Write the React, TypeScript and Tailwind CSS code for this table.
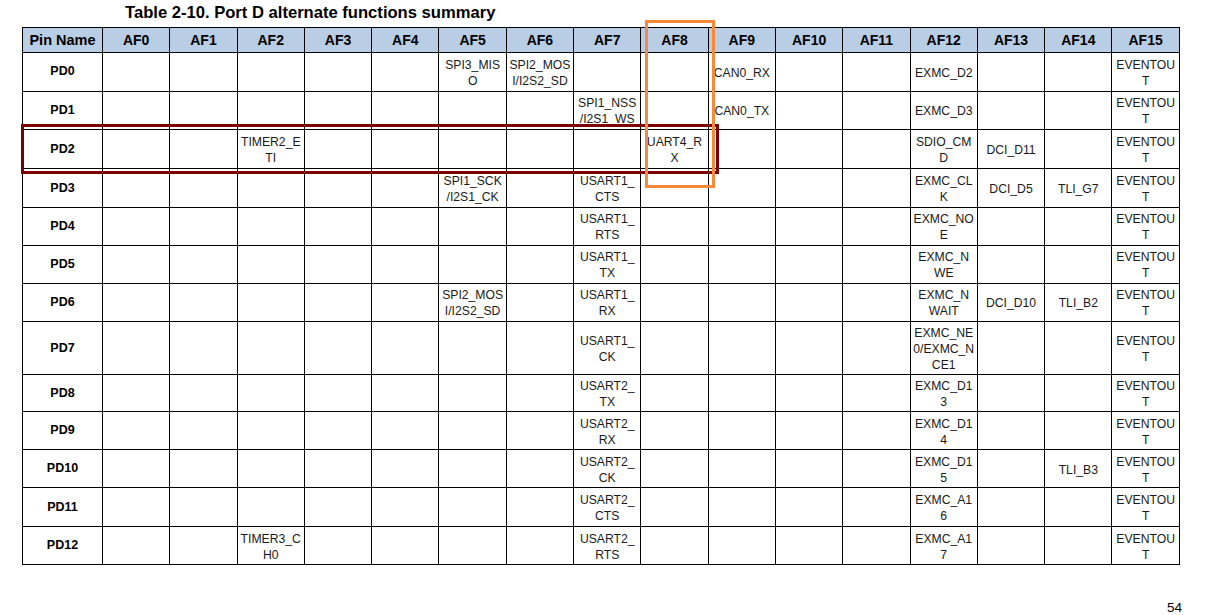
const AF_COUNT = 16;

type Row = { pin: string; h: string; cells: Record<number, string[]> };

const EV = ["EVENTOU", "T"];

const rows: Row[] = [
  { pin: "PD0", h: "h-[38.7px]", cells: { 5: ["SPI3_MIS", "O"], 6: ["SPI2_MOS", "I/I2S2_SD"], 9: ["CAN0_RX"], 12: ["EXMC_D2"], 15: EV } },
  { pin: "PD1", h: "h-[38.3px]", cells: { 7: ["SPI1_NSS", "/I2S1_WS"], 9: ["CAN0_TX"], 12: ["EXMC_D3"], 15: EV } },
  { pin: "PD2", h: "h-[39.5px]", cells: { 2: ["TIMER2_E", "TI"], 8: ["UART4_R", "X"], 12: ["SDIO_CM", "D"], 13: ["DCI_D11"], 15: EV } },
  { pin: "PD3", h: "h-[38.2px]", cells: { 5: ["SPI1_SCK", "/I2S1_CK"], 7: ["USART1_", "CTS"], 12: ["EXMC_CL", "K"], 13: ["DCI_D5"], 14: ["TLI_G7"], 15: EV } },
  { pin: "PD4", h: "h-[38.3px]", cells: { 7: ["USART1_", "RTS"], 12: ["EXMC_NO", "E"], 15: EV } },
  { pin: "PD5", h: "h-[38px]", cells: { 7: ["USART1_", "TX"], 12: ["EXMC_N", "WE"], 15: EV } },
  { pin: "PD6", h: "h-[38px]", cells: { 5: ["SPI2_MOS", "I/I2S2_SD"], 7: ["USART1_", "RX"], 12: ["EXMC_N", "WAIT"], 13: ["DCI_D10"], 14: ["TLI_B2"], 15: EV } },
  { pin: "PD7", h: "h-[53px]", cells: { 7: ["USART1_", "CK"], 12: ["EXMC_NE", "0/EXMC_N", "CE1"], 15: EV } },
  { pin: "PD8", h: "h-[37.5px]", cells: { 7: ["USART2_", "TX"], 12: ["EXMC_D1", "3"], 15: EV } },
  { pin: "PD9", h: "h-[37.5px]", cells: { 7: ["USART2_", "RX"], 12: ["EXMC_D1", "4"], 15: EV } },
  { pin: "PD10", h: "h-[38.5px]", cells: { 7: ["USART2_", "CK"], 12: ["EXMC_D1", "5"], 14: ["TLI_B3"], 15: EV } },
  { pin: "PD11", h: "h-[39px]", cells: { 7: ["USART2_", "CTS"], 12: ["EXMC_A1", "6"], 15: EV } },
  { pin: "PD12", h: "h-[37.5px]", cells: { 2: ["TIMER3_C", "H0"], 7: ["USART2_", "RTS"], 12: ["EXMC_A1", "7"], 15: EV } },
];

const afs = Array.from({ length: AF_COUNT }, (_, i) => i);

export default function App() {
  return (
    <div className="relative h-[615px] w-[1231px] overflow-hidden bg-white font-['Liberation_Sans',Arial,sans-serif] text-black">
      <div className="flex h-[27px] items-center pl-[125px] pb-[1px] text-[16.6px] font-bold leading-none">
        Table 2-10. Port D alternate functions summary
      </div>

      <table className="ml-[22px] w-[1157px] table-fixed border-collapse">
        <colgroup>
          <col className="w-[80px]" />
          {afs.map((i) => (
            <col key={i} className="w-[67.3px]" />
          ))}
        </colgroup>
        <thead>
          <tr className="h-[25px] bg-[#b9cde5]">
            <th className="border border-black p-0 text-center text-[14.5px] font-bold leading-none">Pin Name</th>
            {afs.map((i) => (
              <th key={i} className="border border-black p-0 text-center text-[14px] font-bold leading-none">
                AF{i}
              </th>
            ))}
          </tr>
        </thead>
        <tbody>
          {rows.map((r) => (
            <tr key={r.pin} className={r.h}>
              <td className="border border-black p-0 text-center text-[12.5px] font-bold">{r.pin}</td>
              {afs.map((i) => (
                <td key={i} className="border border-black p-0 pt-[2px] text-center align-middle text-[12.2px] leading-[16px] whitespace-nowrap text-[#1a1a1a]">
                  {r.cells[i]?.map((line) => (
                    <div key={line}>{line}</div>
                  ))}
                </td>
              ))}
            </tr>
          ))}
        </tbody>
      </table>

      <div className="flex justify-end pr-[49px] pt-[36px] text-[13.5px] leading-none">54</div>

      {/* highlight boxes drawn over the table */}
      <div className="absolute left-[21px] top-[124px] h-[50px] w-[698px] border-[3px] border-[#7b0000]" />
      <div className="absolute left-[645px] top-[20px] h-[168px] w-[70px] border-[3px] border-[#f58b3a]" />
    </div>
  );
}
